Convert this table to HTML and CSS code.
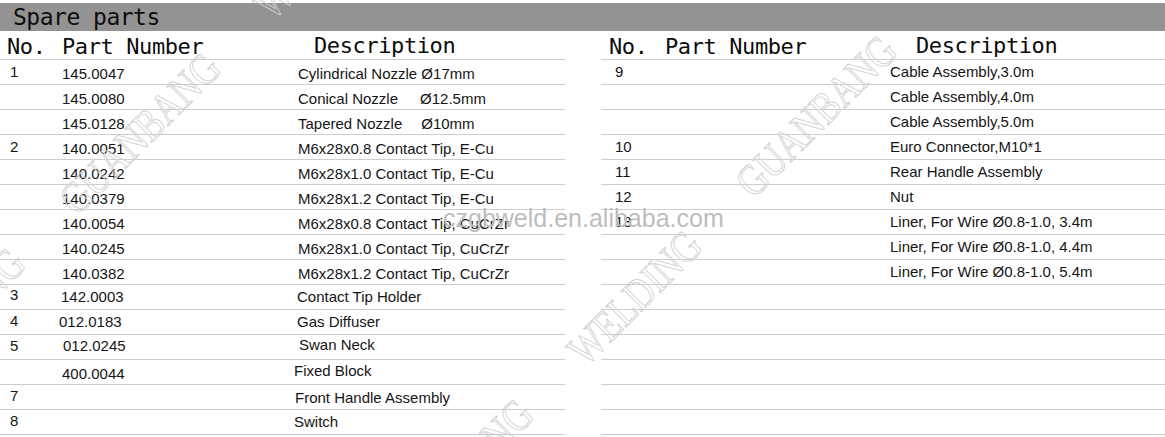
FILE: index.html
```html
<!DOCTYPE html>
<html lang="en">
<head>
<meta charset="utf-8">
<title>Spare parts</title>
<link rel="stylesheet" href="styles.css">
</head>
<body>
<div class="sheet">
  <div class="titlebar">Spare parts</div>
  <div class="tables">
    <div class="tbl tbl-left">
      <div class="row head"><div class="c no">No.</div><div class="c pn">Part Number</div><div class="c desc">Description</div></div>
      <div class="row low"><div class="c no">1</div><div class="c pn">145.0047</div><div class="c desc">Cylindrical Nozzle Ø17mm</div></div>
      <div class="row low"><div class="c no"></div><div class="c pn">145.0080</div><div class="c desc">Conical Nozzle<span class="gap5">Ø12.5mm</span></div></div>
      <div class="row low"><div class="c no"></div><div class="c pn">145.0128</div><div class="c desc">Tapered Nozzle<span class="gap4">Ø10mm</span></div></div>
      <div class="row low"><div class="c no">2</div><div class="c pn">140.0051</div><div class="c desc">M6x28x0.8 Contact Tip, E-Cu</div></div>
      <div class="row low"><div class="c no"></div><div class="c pn">140.0242</div><div class="c desc">M6x28x1.0 Contact Tip, E-Cu</div></div>
      <div class="row low"><div class="c no"></div><div class="c pn">140.0379</div><div class="c desc">M6x28x1.2 Contact Tip, E-Cu</div></div>
      <div class="row low"><div class="c no"></div><div class="c pn">140.0054</div><div class="c desc">M6x28x0.8 Contact Tip, CuCrZr</div></div>
      <div class="row low"><div class="c no"></div><div class="c pn">140.0245</div><div class="c desc">M6x28x1.0 Contact Tip, CuCrZr</div></div>
      <div class="row low"><div class="c no"></div><div class="c pn">140.0382</div><div class="c desc">M6x28x1.2 Contact Tip, CuCrZr</div></div>
      <div class="row"><div class="c no y0">3</div><div class="c pn dxm1">142.0003</div><div class="c desc dxm1">Contact Tip Holder</div></div>
      <div class="row"><div class="c no y1">4</div><div class="c pn dxm3">012.0183</div><div class="c desc dxm1">Gas Diffuser</div></div>
      <div class="row"><div class="c no y1">5</div><div class="c pn dxp1 y1">012.0245</div><div class="c desc dxp1 y0">Swan Neck</div></div>
      <div class="row"><div class="c no"></div><div class="c pn y4">400.0044</div><div class="c desc dxm4 y1">Fixed Block</div></div>
      <div class="row"><div class="c no y1">7</div><div class="c pn"></div><div class="c desc dxm3 y3">Front Handle Assembly</div></div>
      <div class="row"><div class="c no y1">8</div><div class="c pn"></div><div class="c desc dxm4">Switch</div></div>
    </div>
    <div class="tbl tbl-right">
      <div class="row head"><div class="c no">No.</div><div class="c pn">Part Number</div><div class="c desc">Description</div></div>
      <div class="row"><div class="c no">9</div><div class="c pn"></div><div class="c desc">Cable Assembly,3.0m</div></div>
      <div class="row"><div class="c no"></div><div class="c pn"></div><div class="c desc">Cable Assembly,4.0m</div></div>
      <div class="row"><div class="c no"></div><div class="c pn"></div><div class="c desc">Cable Assembly,5.0m</div></div>
      <div class="row"><div class="c no">10</div><div class="c pn"></div><div class="c desc">Euro Connector,M10*1</div></div>
      <div class="row"><div class="c no">11</div><div class="c pn"></div><div class="c desc">Rear Handle Assembly</div></div>
      <div class="row"><div class="c no">12</div><div class="c pn"></div><div class="c desc">Nut</div></div>
      <div class="row"><div class="c no">13</div><div class="c pn"></div><div class="c desc">Liner, For Wire Ø0.8-1.0, 3.4m</div></div>
      <div class="row"><div class="c no"></div><div class="c pn"></div><div class="c desc">Liner, For Wire Ø0.8-1.0, 4.4m</div></div>
      <div class="row"><div class="c no"></div><div class="c pn"></div><div class="c desc">Liner, For Wire Ø0.8-1.0, 5.4m</div></div>
      <div class="row"><div class="c no"></div><div class="c pn"></div><div class="c desc"></div></div>
      <div class="row"><div class="c no"></div><div class="c pn"></div><div class="c desc"></div></div>
      <div class="row"><div class="c no"></div><div class="c pn"></div><div class="c desc"></div></div>
      <div class="row"><div class="c no"></div><div class="c pn"></div><div class="c desc"></div></div>
      <div class="row"><div class="c no"></div><div class="c pn"></div><div class="c desc"></div></div>
      <div class="row"><div class="c no"></div><div class="c pn"></div><div class="c desc"></div></div>
    </div>
  </div>
  <svg class="watermark" width="1165" height="437" viewBox="0 0 1165 437" aria-hidden="true">
    <g class="wm-lines">
      <text transform="translate(390 563) rotate(-45) scale(0.82 1)"><tspan x="0">GUANBANG</tspan><tspan x="337">WELDING</tspan><tspan x="627">GUANBANG</tspan><tspan x="964">WELDING</tspan></text>
      <text transform="translate(-91 385) rotate(-45) scale(0.82 1)"><tspan x="0">WELDING</tspan><tspan x="290">GUANBANG</tspan><tspan x="627">WELDING</tspan><tspan x="917">GUANBANG</tspan></text>
    </g>
    <text class="wm-url" x="443" y="227">czgbweld.en.alibaba.com</text>
  </svg>
</div>
</body>
</html>
```
FILE: styles.css
```css
* { box-sizing: border-box; }

html, body {
  margin: 0;
  padding: 0;
  background: #ffffff;
}

.sheet {
  position: relative;
  width: 1165px;
  height: 437px;
  padding-top: 3px;
  overflow: hidden;
  background: #ffffff;
  color: #151515;
}

.titlebar {
  height: 28px;
  background: #939393;
  padding-left: 13px;
  font-family: "DejaVu Sans Mono", monospace;
  font-size: 23px;
  letter-spacing: -0.5px;
  line-height: 28px;
  color: #0c0c0c;
}

.tables {
  display: flex;
  gap: 36px;
}

.tbl-left { width: 565px; }
.tbl-right { flex: 1; }

.row {
  display: grid;
  height: 25px;
  border-bottom: 1px solid #cdcdcd;
}

.tbl-left .row { grid-template-columns: 62px 236px 1fr; }
.tbl-right .row { grid-template-columns: 64px 225px 1fr; }

.c {
  padding-top: 2px;
  font-family: "Liberation Sans", Arial, sans-serif;
  font-size: 15px;
  line-height: 20px;
  white-space: nowrap;
}

.tbl-left .no { padding-left: 10px; }
.tbl-right .no { padding-left: 14px; }

.low .pn, .low .desc { padding-top: 4px; }

.gap5 { margin-left: 22px; }
.gap4 { margin-left: 19px; }

.y0 { padding-top: 0; }
.y1 { padding-top: 1px; }
.y3 { padding-top: 3px; }
.y4 { padding-top: 4px; }

.dxm1 { margin-left: -1px; }
.dxm3 { margin-left: -3px; }
.dxm4 { margin-left: -4px; }
.dxp1 { margin-left: 1px; }

.row.head {
  height: 29px;
}

.head .c {
  padding-top: 4px;
  font-family: "DejaVu Sans Mono", monospace;
  font-size: 22px;
  line-height: 24px;
  letter-spacing: -0.4px;
  color: #0c0c0c;
}

.tbl-left .head .no { padding-left: 7px; }
.tbl-left .head .pn { padding-left: 0; }
.tbl-left .head .desc { padding-left: 16px; padding-top: 3px; }
.tbl-right .head .no { padding-left: 8px; }
.tbl-right .head .desc { padding-left: 26px; padding-top: 3px; }

.watermark {
  position: absolute;
  left: 0;
  top: 0;
  pointer-events: none;
}

.wm-lines text {
  font-family: "Liberation Serif", "Times New Roman", serif;
  font-size: 44px;
  fill: none;
  stroke: #d2d2d2;
  stroke-width: 1;
}

.wm-url {
  font-family: "Liberation Sans", Arial, sans-serif;
  font-size: 25px;
  fill: #bdbdbd;
}
```
